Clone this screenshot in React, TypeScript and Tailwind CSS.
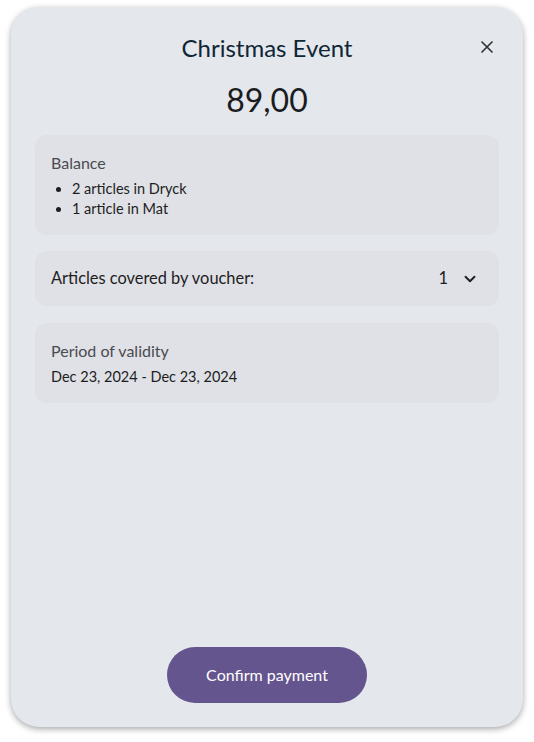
import { X, ChevronDown } from "lucide-react";

export default function App() {
  return (
    <div className="min-h-screen bg-white pl-[11px] pt-[7px]" style={{ fontFamily: "Lato, 'Open Sans', sans-serif" }}>
      <div className="relative flex h-[720px] w-[512px] flex-col rounded-[28px] bg-[#e4e7ec] px-6 shadow-[0_2px_6px_rgba(0,0,0,0.35)]">
        <button className="absolute right-[26px] top-[30px] text-[#333]">
          <X size={20} strokeWidth={2} />
        </button>
        <h1 className="mt-[25px] text-center text-[24px] leading-[32px] text-[#0f2636]">Christmas Event</h1>
        <div className="mt-4 text-center text-[32px] leading-[40px] text-[#1b1c1f]">89,00</div>

        <div className="mt-[15px] rounded-xl bg-[#dfe1e6] px-4 pb-4 pt-[18px]">
          <div className="text-[16px] leading-[20px] text-[#4a4b50]">Balance</div>
          <ul className="mt-[6px] list-disc pl-[21px] text-[14.5px] leading-[20px] text-[#1d1d22]">
            <li>2 articles in Dryck</li>
            <li>1 article in Mat</li>
          </ul>
        </div>

        <div className="mt-4 flex h-[55px] items-center rounded-xl bg-[#dfe1e6] px-4">
          <span className="flex-1 text-[16.4px] text-[#1d1d22]">Articles covered by voucher:</span>
          <span className="text-[16.4px] text-[#1d1d22]">1</span>
          <ChevronDown size={18} strokeWidth={2.5} className="ml-[13px] mr-[4px] text-[#1d1d22]" />
        </div>

        <div className="mt-[17px] rounded-xl bg-[#dfe1e6] px-4 pb-4 pt-[18px]">
          <div className="text-[16px] leading-[20px] text-[#4a4b50]">Period of validity</div>
          <div className="mt-[6px] text-[14.5px] leading-[20px] text-[#1d1d22]">Dec 23, 2024 - Dec 23, 2024</div>
        </div>

        <div className="mt-auto mb-6 flex justify-center">
          <button className="h-[56px] w-[200px] rounded-full bg-[#65558f] text-[16px] text-white">Confirm payment</button>
        </div>
      </div>
    </div>
  );
}
